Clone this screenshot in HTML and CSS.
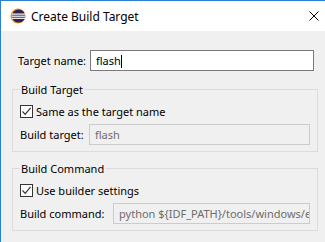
FILE: index.html
```html
<!DOCTYPE html>
<html lang="en">
<head>
    <meta charset="UTF-8">
    <title>Create Build Target</title>
    <link rel="stylesheet" href="styles.css">
</head>
<body>
    <div class="window">
        <div class="titlebar">
            <svg class="appicon" width="16" height="16" viewBox="0 0 16 16">
                <circle cx="8" cy="8" r="7.5" fill="#f7941e"/>
                <circle cx="8.6" cy="8" r="6.6" fill="#2c2255"/>
                <rect x="2" y="5.5" width="13" height="1.2" fill="#fff"/>
                <rect x="2" y="7.6" width="13" height="1.2" fill="#fff"/>
                <rect x="2" y="9.7" width="13" height="1.2" fill="#fff"/>
            </svg>
            <span class="title">Create Build Target</span>
            <svg class="close" width="10" height="10" viewBox="0 0 10 10">
                <path d="M0.5 0.5 L9.5 9.5 M9.5 0.5 L0.5 9.5" stroke="#000" stroke-width="1"/>
            </svg>
        </div>
        <div class="content">
            <div class="row top">
                <span class="label">Target name:</span>
                <div class="input active">flash<span class="caret"></span></div>
            </div>

            <fieldset class="group">
                <legend>Build Target</legend>
                <div class="check">
                    <span class="box"><svg width="11" height="11" viewBox="0 0 11 11"><path d="M1.5 5.5 L4.2 8.3 L9.6 1.8" fill="none" stroke="#333" stroke-width="1.2"/></svg></span>
                    <span>Same as the target name</span>
                </div>
                <div class="row">
                    <span class="label l1">Build target:</span>
                    <div class="input disabled">flash</div>
                </div>
            </fieldset>

            <fieldset class="group">
                <legend>Build Command</legend>
                <div class="check">
                    <span class="box"><svg width="11" height="11" viewBox="0 0 11 11"><path d="M1.5 5.5 L4.2 8.3 L9.6 1.8" fill="none" stroke="#333" stroke-width="1.2"/></svg></span>
                    <span>Use builder settings</span>
                </div>
                <div class="row">
                    <span class="label l2">Build command:</span>
                    <div class="input disabled">python ${IDF_PATH}/tools/windows/eclipse_make.sh</div>
                </div>
            </fieldset>
        </div>
    </div>
</body>
</html>
```

FILE: styles.css
```css
body {
    margin: 0;
    background-color: #f0f0f0;
    font-family: "Noto Sans", sans-serif;
    font-size: 11px;
    color: #000;
}

.window {
    border-top: 1px solid #2b7fd4;
    border-left: 1px solid #2b7fd4;
    height: 241px;
    overflow: hidden;
}

.titlebar {
    background-color: #fff;
    height: 30px;
    display: flex;
    align-items: center;
    padding-left: 9px;
}

.appicon {
    margin-right: 5px;
}

.title {
    font-size: 12px;
    flex: 1;
}

.close {
    margin-right: 6px;
}

.content {
    padding: 19px 7px 0 11px;
}

.row {
    display: flex;
    align-items: center;
}

.row.top {
    padding-left: 6px;
    padding-right: 4px;
    margin-bottom: 11px;
}

.label {
    width: 72px;
    flex-shrink: 0;
    white-space: nowrap;
}

.label.l1 {
    width: 69px;
}

.label.l2 {
    width: 93px;
}

.input {
    flex: 1;
    min-width: 0;
    height: 19px;
    line-height: 19px;
    padding: 0 5px;
    white-space: nowrap;
    overflow: hidden;
}

.input.active {
    border: 1px solid #7a7a7a;
    background-color: #fff;
}

.caret {
    display: inline-block;
    width: 1px;
    height: 13px;
    background-color: #000;
    vertical-align: -3px;
}

.input.disabled {
    border: 1px solid #cccccc;
    background-color: #f0f0f0;
    color: #6d6d6d;
}

.group {
    border: 1px solid #dcdcdc;
    margin: 0;
    min-width: 0;
    padding: 7px 7px 6px 7px;
}

.group + .group {
    margin-top: 9px;
}

legend {
    padding: 0 1px;
}

.check {
    display: flex;
    align-items: center;
    height: 14px;
    margin-bottom: 6px;
}

.box {
    width: 11px;
    height: 11px;
    border: 1px solid #333;
    background-color: #fff;
    margin-right: 3px;
    display: flex;
}
```
